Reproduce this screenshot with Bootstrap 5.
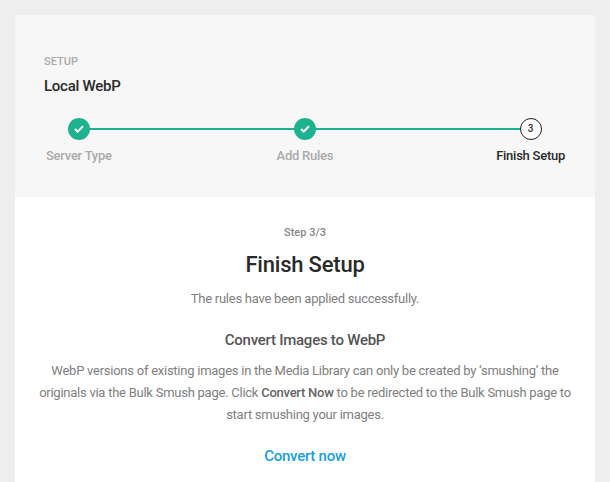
<!DOCTYPE html>
<html><head><meta charset="utf-8">
<link href="https://cdn.jsdelivr.net/npm/bootstrap@5.3.0/dist/css/bootstrap.min.css" rel="stylesheet">
<style>
html,body{height:482px;overflow:hidden}
body{background:#eeeeee;font-family:Roboto,sans-serif;padding:15px;color:#808080;letter-spacing:-.25px;-webkit-font-smoothing:antialiased}
.panel{background:#fff;height:467px;overflow:hidden;border-radius:4px 4px 0 0}
.head{background:#f7f7f7;height:182px;padding:37px 29px 0}
.eyebrow{font-size:11px;font-weight:500;color:#aaa;line-height:20px;letter-spacing:0}
.title{font-size:15px;font-weight:500;color:#2a2a2a;line-height:28px}
.track{position:relative;margin:18px 1px 0 2px}
.line{height:2px;background:#1fb28e;position:absolute;left:35px;right:24px;top:10px}
.stepw{position:relative;display:flex;flex-direction:column;align-items:center;font-size:13px;font-weight:500;color:#aaa;line-height:22px;white-space:nowrap}
.dot{width:22px;height:22px;border-radius:50%;background:#1fb28e;display:flex;align-items:center;justify-content:center;margin-bottom:5px}
.dot.cur{background:#fff;border:1px solid #222;color:#333;font-size:10px;font-weight:500;letter-spacing:0}
.stepw.on{color:#2a2a2a}
.stepw.mid{margin-left:2px}
.body-area{padding:28px 20px 0;text-align:center}
.stepno{font-size:11px;font-weight:500;color:#888;line-height:16px;letter-spacing:0}
.h-main{font-size:22px;font-weight:500;color:#2a2a2a;line-height:30px;margin:9px 0 0;letter-spacing:-.2px}
.sub{font-size:13px;line-height:22px;margin:8px 0 0}
.h-sec{font-size:15px;font-weight:500;color:#555;line-height:22px;margin:19px 0 0;letter-spacing:-.25px}
.para{font-size:13px;line-height:22px;margin:9px 0 0}
.para b{font-weight:500;color:#666}
.go{display:inline-block;font-size:15px;font-weight:500;color:#17a0e0;text-decoration:none;margin-top:19px;line-height:22px}
</style></head><body>
<div class="panel">
<div class="head">
<div class="eyebrow">SETUP</div>
<div class="title">Local WebP</div>
<div class="track">
<div class="line"></div>
<div class="d-flex justify-content-between">
<div class="stepw"><span class="dot"><svg width="10" height="8" viewBox="0 0 10 8"><path d="M1 4l2.6 2.6L9 1.2" fill="none" stroke="#fff" stroke-width="2"/></svg></span>Server Type</div>
<div class="stepw mid"><span class="dot"><svg width="10" height="8" viewBox="0 0 10 8"><path d="M1 4l2.6 2.6L9 1.2" fill="none" stroke="#fff" stroke-width="2"/></svg></span>Add Rules</div>
<div class="stepw on"><span class="dot cur">3</span>Finish Setup</div>
</div>
</div>
</div>
<div class="body-area">
<div class="stepno">Step 3/3</div>
<h1 class="h-main">Finish Setup</h1>
<p class="sub">The rules have been applied successfully.</p>
<h2 class="h-sec">Convert Images to WebP</h2>
<p class="para">WebP versions of existing images in the Media Library can only be created by ‘smushing’ the originals via the Bulk Smush page. Click <b>Convert Now</b> to be redirected to the Bulk Smush page to start smushing your images.</p>
<a class="go" href="#">Convert now</a>
</div>
</div>
<script src="https://cdn.jsdelivr.net/npm/bootstrap@5.3.0/dist/js/bootstrap.bundle.min.js"></script>
</body></html>
